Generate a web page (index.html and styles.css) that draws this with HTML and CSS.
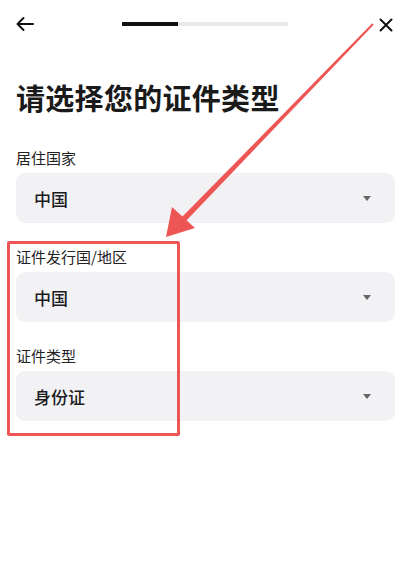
FILE: index.html
```html
<!DOCTYPE html>
<html lang="zh">
<head>
<meta charset="utf-8">
<link rel="stylesheet" href="styles.css">
</head>
<body>
<div class="page">
  <header class="topbar">
    <svg class="icon-back" width="20" height="16" viewBox="0 0 20 16">
      <path d="M18 8H2.5M8.5 2L2.5 8L8.5 14" fill="none" stroke="#111" stroke-width="2" stroke-linecap="round" stroke-linejoin="round"/>
    </svg>
    <div class="progress"><div class="progress-fill"></div></div>
    <svg class="icon-close" width="14" height="14" viewBox="0 0 14 14">
      <path d="M1.5 1.5L12.5 12.5M12.5 1.5L1.5 12.5" fill="none" stroke="#111" stroke-width="2" stroke-linecap="round"/>
    </svg>
  </header>
  <h1 class="title">请选择您的证件类型</h1>
  <div class="form">
    <div class="field">
      <div class="label">居住国家</div>
      <div class="select"><span class="value">中国</span><span class="caret"></span></div>
    </div>
    <div class="field">
      <div class="label">证件发行国/地区</div>
      <div class="select"><span class="value">中国</span><span class="caret"></span></div>
    </div>
    <div class="field">
      <div class="label">证件类型</div>
      <div class="select"><span class="value">身份证</span><span class="caret"></span></div>
    </div>
  </div>
  <div class="highlight-box"></div>
  <svg class="annot-arrow" width="408" height="573" viewBox="0 0 408 573">
    <polygon points="373.7,24.7 372.3,23.3 181,218.1 185,221.9" fill="#ee5555"/>
    <polygon points="166,237 172,207 195,228" fill="#ee5555"/>
  </svg>
</div>
</body>
</html>
```

FILE: styles.css
```css
* { box-sizing: border-box; }
html, body { margin: 0; padding: 0; background: #fff; }
body {
  font-family: "Noto Sans CJK SC", "Noto Sans", sans-serif;
  color: #1c1c1e;
}
.page {
  position: relative;
  width: 408px;
  height: 573px;
  overflow: hidden;
}
.topbar {
  height: 48px;
  display: flex;
  align-items: center;
  padding: 0 15px 0 15px;
  position: relative;
}
.icon-back { display: block; }
.progress {
  position: absolute;
  left: 122px;
  top: 22px;
  width: 166px;
  height: 4px;
  background: #e9e9eb;
}
.progress-fill {
  width: 56px;
  height: 100%;
  background: #111;
}
.icon-close { display: block; margin-left: auto; margin-top: 2px; }
.title {
  margin: 29px 0 0 16px;
  font-size: 29px;
  line-height: 40px;
  font-weight: 700;
  color: #1a1a1a;
  letter-spacing: 0.3px;
}
.form {
  margin-top: 31px;
  padding: 0 13px 0 16px;
  display: flex;
  flex-direction: column;
  gap: 24px;
}
.field {
  display: flex;
  flex-direction: column;
  gap: 5px;
}
.label {
  font-size: 15px;
  line-height: 20px;
  color: #222;
}
.select {
  height: 50px;
  border-radius: 9px;
  background: #f2f2f4;
  display: flex;
  align-items: center;
  padding: 0 24px 0 18px;
}
.value {
  font-size: 17px;
  font-weight: 500;
  color: #1c1c1e;
}
.caret {
  margin-left: auto;
  width: 0;
  height: 0;
  border-left: 4.5px solid transparent;
  border-right: 4.5px solid transparent;
  border-top: 5px solid #666;
}
.highlight-box {
  position: absolute;
  left: 7px;
  top: 241px;
  width: 173px;
  height: 195px;
  border: 3.5px solid #ee5555;
  border-radius: 2px;
}
.annot-arrow {
  position: absolute;
  left: 0;
  top: 0;
  pointer-events: none;
}
```
